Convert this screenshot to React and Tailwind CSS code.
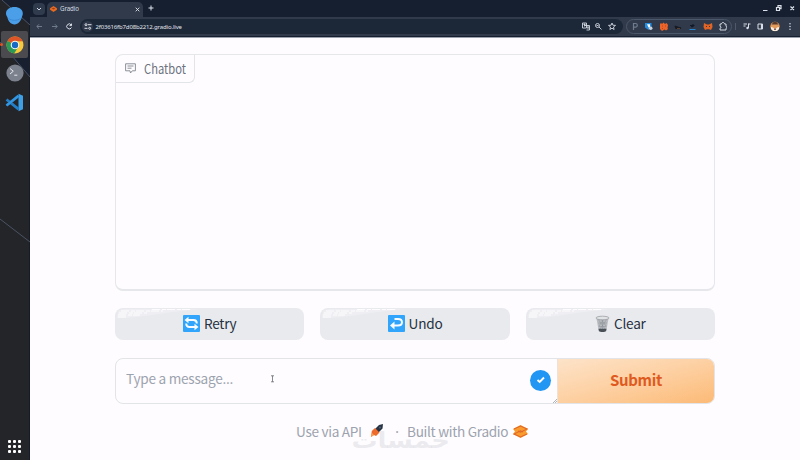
import React from 'react';

const sans = "font-['Noto_Sans_CJK_SC',sans-serif]";

function WaterIcon() {
  return (
    <svg width="19" height="19" viewBox="0 0 19 19">
      <path d="M1 7.500C1 3.500 4.800 1 9.500 1S17.800 3.500 17.800 7.500c0 1.500-.6 2.500-1 3.800-1 4-3.700 7-7.200 7.300-3.900-.3-6.400-3.400-7.200-7.300C1.700 9.800 1 9 1 7.500z" fill="#4b9fe9" />
      <path d="M3.500 12.500c2 1.300 4 1.800 6 1.800s4.500-.6 6-1.800" fill="none" stroke="#3a8ad6" strokeWidth="1" />
    </svg>
  );
}

function ChromeIcon() {
  return (
    <svg width="18" height="18" viewBox="0 0 18 18">
      <circle cx="9" cy="9" r="8.500" fill="#f8c93c" />
      <path d="M9 9L1.600 4.800A8.500 8.500 0 0 0 8.200 17.500L12.500 10.500z" fill="#2a9a55" />
      <path d="M9 9L1.600 4.800A8.500 8.500 0 0 1 16.700 5.200H9z" fill="#de5527" />
      <circle cx="9" cy="9" r="4.300" fill="#f5f7fa" />
      <circle cx="9" cy="9" r="3.200" fill="#1769c4" />
    </svg>
  );
}

function TerminalIcon() {
  return (
    <svg width="18" height="18" viewBox="0 0 18 18">
      <circle cx="9" cy="9" r="8.600" fill="#7c828d" />
      <path d="M4 4.500l3.300 2.700L4 10M8.300 11.200h3" fill="none" stroke="#e5e7eb" strokeWidth="1" />
    </svg>
  );
}

function CodeIcon() {
  return (
    <svg width="19" height="19" viewBox="0 0 19 19">
      <path d="M13.500 0.800l4.500 2v13.400l-4.500 2z" fill="#3e9fe5" />
      <path d="M1.500 6.500l12 9.700M1.500 12.500l12-9.700" stroke="#237fc8" strokeWidth="2.800" />
      <path d="M1.500 12.500l12-9.700" stroke="#3597df" strokeWidth="2.200" />
    </svg>
  );
}

function Dock() {
  return (
    <aside className="relative flex w-[30px] shrink-0 flex-col items-center border-r border-[#141c2b] bg-[#242529]">
      <svg className="absolute left-0 top-0" width="30" height="250" viewBox="0 0 30 250">
        <path d="M2 0L30 25V0zM0 43l30 35V41L27 39H0z" fill="#18202f" />
        <path d="M2 0l28 25M0 42l30 35M0 219l30 23" fill="none" stroke="#566072" strokeWidth="0.8" />
      </svg>
      <div className="relative mt-1.5 flex h-[19px] w-full items-center justify-center"><WaterIcon /></div>
      <div className="relative mt-1.5 flex h-[27px] w-[27px] items-center justify-center rounded-xs bg-[#4b4b4f]">
        <ChromeIcon />
      </div>
      <div className="relative mt-1.5 flex h-[18px] items-center"><TerminalIcon /></div>
      <div className="relative mt-[10px] flex h-[20px] items-center"><CodeIcon /></div>
      <span className="absolute left-0 top-[43px] size-[3px] rounded-full bg-[#df5426]" />
      <div className="mb-[7px] mt-auto grid grid-cols-3 gap-[2px]">
        {Array.from({ length: 9 }, (_, i) => <i key={i} className="size-[3px] rounded-[1px] bg-white" />)}
      </div>
    </aside>
  );
}

function BrowserBar() {
  return (
    <header className="h-[38px] shrink-0 border-b border-[#9ba1ac] bg-[#151f30]">
      <div className="flex h-[17px] items-end">
        <div className="mb-[2px] ml-[3px] flex size-[12px] items-center justify-center rounded bg-[#303b4d]">
          <svg width="6" height="4" viewBox="0 0 6 4"><path d="M1 1l2 2 2-2" fill="none" stroke="#d9dee8" /></svg>
        </div>
        <div className="ml-[2px] flex h-[15px] w-[96px] items-center rounded-t-[5px] bg-[#303a4b] pb-px pl-[3px] pr-[3px]">
          <svg width="7" height="6" viewBox="0 0 8 7"><path d="M0 2.500L4 0l4 2.500v2L4 7 0 4.500z" fill="#e86b20" /><path d="M2 3l2-1 2 1-2 1z" fill="#963d19" /></svg>
          <span className="ml-[3px] font-['Noto_Sans',sans-serif] text-[6.2px] leading-none tracking-[-0.1px] text-[#d5dae3]">Gradio</span>
          <svg className="ml-auto" width="5" height="5" viewBox="0 0 5 5"><path d="M.7.7l3.600 3.600M4.300.7L.7 4.300" stroke="#e1e5ec" strokeWidth=".9" /></svg>
        </div>
        <svg className="mb-[6px] ml-[5px]" width="6" height="6" viewBox="0 0 6 6"><path d="M3 .5v5M.5 3h5" stroke="#dfe4ec" /></svg>
        <svg className="mb-[4px] ml-auto mr-[4px]" width="34" height="9" viewBox="0 0 34 9" fill="none" stroke="#dce1e9" strokeWidth="1.200">
          <path d="M1 6.500h4.500M28.500 2.500l3.500 3.500M32 2.500L28.500 6" />
          <path d="M14.500 3.500h3v3h-3zM16 3V1.700h3v3h-1" />
        </svg>
      </div>
      <div className="flex h-[19px] items-center bg-[#303a4b]">
        <svg className="ml-[6px]" width="37" height="9" viewBox="0 0 37 9" fill="none" strokeWidth="1">
          <path d="M6 4.500H1m2-2.200L.8 4.500 3 6.700M16 4.500h5m-2-2.200l2.200 2.200L19 6.700" stroke="#707b8b" />
          <path d="M35.300 3A2.500 2.500 0 1 0 35.500 5.500M35.500 1.600v2h-2" stroke="#dce1e9" />
        </svg>
        <div className="ml-[7px] flex h-[15px] w-[543px] items-center rounded-full bg-[#1c2738] pl-[2px] pr-[5px]">
          <div className="flex size-[11px] items-center justify-center rounded-full bg-[#303a4b]">
            <svg width="8" height="7" viewBox="0 0 8 7" fill="none" stroke="#dce1e9" strokeWidth="1"><path d="M4 1.700h3.500M.5 5.300h3" /><circle cx="2" cy="1.700" r="1" /><circle cx="5.700" cy="5.300" r="1" /></svg>
          </div>
          <span className="ml-[2.5px] whitespace-nowrap font-['Noto_Sans',sans-serif] text-[6px] leading-none tracking-[-0.15px] text-[#e0e4ea]">2f03616fb7d08b2212.gradio.live</span>
          <svg className="ml-auto" width="37" height="9" viewBox="0 0 37 9" fill="none" stroke="#d3d9e2" strokeWidth=".9">
            <path d="M1.500 1h4v5h-4zM3.500 3.500h5V8h-3M2.500 2.500h2M3.500 1.500v3M6 5h2M7 5v2" />
            <circle cx="16.500" cy="3.500" r="2" /><path d="M18 5l2.500 2.500M15.500 3.500h2" />
            <path d="M31 1l.9 2.200 2.600.2-2 1.600.6 2.500L31 6.200l-2.100 1.300.6-2.500-2-1.600 2.600-.2z" />
          </svg>
        </div>
        <div className="ml-[3px] flex h-[15px] w-[106px] items-center rounded-full border border-[#4b576a] px-[4px]">
          <svg width="96" height="11" viewBox="0 0 96 11">
            <path d="M2.500 9V2.500H4.500a1.800 1.800 0 0 1 0 3.600H2.500" fill="none" stroke="#6f7b8e" strokeWidth="1.200" />
            <path d="M14 2h6.500v4.500L17.500 9 14 6.500z" fill="#248de0" /><path d="M16 3.200h3v3.300h-1.500z" fill="#fff" /><circle cx="19.700" cy="7.300" r="1.800" fill="#c9d0da" />
            <path d="M29 3l1-1 1 1 1.500-1.500L34 3l1.500-1L37 4l-.5 3L37 8l-2 1.500-1.500-1L31 10l-2-2z" fill="#ed6429" /><path d="M31 5h1M34 5h1M31 7.500h1" stroke="#bd4321" />
            <path d="M43.500 5c1.500-1 3 .8 5 1 2 0 2.500 1 1 2h-5z" fill="#171b22" /><path d="M46 7.500h3" stroke="#8a5b3c" strokeWidth=".6" />
            <path d="M59 4.500h4.500M62 3v3M60 5.700h2" stroke="#111a29" strokeWidth="1.200" /><path d="M58.500 8.500h6" stroke="#2588d4" strokeWidth="1" />
            <path d="M73 2l3 1.500h2L81 2l.5 4-1.500 3-2-.7h-2L74 9l-1.500-3z" fill="#df6425" /><path d="M75 5.500h1M78 5.500h1" stroke="#4b3335" />
            <path d="M89 3h1.500c0-2 3-2 3 0H95v2.300c1.200 0 1.200 2 0 2V9h-6V7.300c1.300 0 1.300-2 0-2z" fill="none" stroke="#d6dbe4" />
          </svg>
        </div>
        <span className="ml-[3px] h-[7px] w-px bg-[#4f5968]" />
        <svg className="ml-[7px]" width="54" height="11" viewBox="0 0 54 11" fill="none" stroke="#d8dde6">
          <path d="M.5 3h3.500M.5 5h2M5.500 2.500v4.500M5.500 3h2" /><circle cx="4.500" cy="7" r="1.200" fill="#d8dde6" stroke="none" />
          <path d="M15 3h4.500v5H15z" /><path d="M18.800 3v5" strokeWidth="1.800" />
          <circle cx="32" cy="5.500" r="4.700" fill="#e09a5c" stroke="none" /><path d="M28.500 3.500l2-2.500h3l2 2.500z" fill="#57392d" stroke="none" /><path d="M28 6l2 .5 2 2 2-2 2-.5v2l-2 2h-4l-2-2z" fill="#f9edde" stroke="none" /><path d="M31 9l1-2 1 2z" fill="#4d3a52" stroke="none" />
          <circle cx="47" cy="2.700" r=".8" fill="#c8ced8" stroke="none" /><circle cx="47" cy="5.500" r=".8" fill="#c8ced8" stroke="none" /><circle cx="47" cy="8.300" r=".8" fill="#c8ced8" stroke="none" />
        </svg>
      </div>
    </header>
  );
}

function RetryIcon() {
  return (
    <svg width="17" height="17" viewBox="0 0 17 17">
      <rect width="17" height="17" rx="1" fill="#31a5fb" />
      <path d="M4 5h6.500c2.200 0 3.300 1.200 3.300 3.500M13 12H6.500c-2.200 0-3.300-1.200-3.300-3.500" fill="none" stroke="#f8fcff" strokeWidth="1.900" />
      <path d="M1.500 5L5.500 1.800v6.400zM15.500 12L11.500 8.800v6.400z" fill="#f8fcff" />
    </svg>
  );
}

function UndoIcon() {
  return (
    <svg width="17" height="17" viewBox="0 0 17 17">
      <rect width="17" height="17" rx="1" fill="#31a5fb" />
      <path d="M6.500 4h3.500c5.300 0 5.300 6.500 0 6.500H5" fill="none" stroke="#f8fcff" strokeWidth="2" />
      <path d="M2 10.500L6.500 6.500v8z" fill="#f8fcff" />
    </svg>
  );
}

function BinIcon() {
  return (
    <svg width="15" height="18" viewBox="0 0 15 18">
      <path d="M1.500 3.500h12L11.300 16c-1.500 1.400-6 1.400-7.600 0z" fill="#b9bcc1" />
      <path d="M3 4l7 10M6 4l5 7M12 4L5 14M9 4l-5 7M7.500 4v10M3.200 8h8.600M3.700 11.500h7.600" stroke="#8b9097" strokeWidth=".5" />
      <path d="M3.500 13.800h8l-.5 2.200c-1.500 1.300-5.400 1.300-7 0z" fill="#4a5058" />
      <ellipse cx="7.500" cy="3" rx="6.500" ry="1.800" fill="#e2e3e5" stroke="#9b9fa5" strokeWidth=".8" />
    </svg>
  );
}

function Action({ icon, children }) {
  return (
    <button className="relative flex h-8 items-center justify-center gap-1 overflow-hidden rounded-[8px] bg-[#e8eaed] text-[13.6px] leading-none tracking-[-0.25px] text-[#263041]">
      <svg className="absolute left-0 top-0" width="88" height="12" viewBox="0 0 88 12">
        <path d="M3 4Q4 2 9 1H84L67 3 50 5 37 7 22 9 7 10H2z" fill="#efeff3" />
        <path d="M3 9h10M3 7h22M4 5h28M6 3h42M37 1.500h38" stroke="#fefcfe" strokeWidth="1.200" strokeDasharray="8 2 4 1" />
      </svg>
      <span className="relative -mt-px">{icon}</span>
      <span className="relative">{children}</span>
    </button>
  );
}

export default function App() {
  return (
    <div className={`relative flex h-[460px] w-[800px] overflow-hidden bg-[#fefcfe] ${sans}`}>
      <Dock />
      <div className="flex min-w-0 flex-1 flex-col">
        <BrowserBar />
        <main className="ml-[85px] mt-4 w-[600px]">
          <section className="h-[237px] rounded-[8px] border border-b-2 border-[#e5e7eb]">
            <div className="flex h-[28px] w-[79px] items-center rounded-br-[6px] border-b border-r border-[#e2e4e8] pl-[9px] text-[13.3px] leading-none text-[#6b7280]">
              <svg className="shrink-0" width="11" height="11" viewBox="0 0 11 11" fill="none" stroke="#7e858f" strokeWidth=".9"><path d="M.6.8h9.800v7H7.300L5.500 10 5 7.800H.6zM2.500 3h6M2.500 5.200h4" /></svg>
              <span className="ml-[8px] inline-block origin-left scale-x-[.84]">Chatbot</span>
            </div>
          </section>
          <div className="mt-[17px] grid grid-cols-3 gap-4">
            <Action icon={<RetryIcon />}>Retry</Action>
            <Action icon={<UndoIcon />}>Undo</Action>
            <Action icon={<BinIcon />}>Clear</Action>
          </div>
          <div className="mt-[18px] flex h-[46px] overflow-hidden rounded-[8px] border border-[#e2e4e8]">
            <div className="relative flex flex-1 items-center pl-[10px] pr-[6px] text-[13.6px] leading-none tracking-[-0.25px] text-[#9ca3af]">
              <span className="mb-1 w-[107px] whitespace-nowrap">Type a message...</span>
              <svg className="mb-1 ml-[37px]" width="5" height="8" viewBox="0 0 5 8" fill="none" stroke="#666b74" strokeWidth=".8"><path d="M1 .8h3M2.500.8v6M1 6.800h3" /></svg>
              <div className="ml-auto mb-[2px] flex size-[21px] items-center justify-center rounded-full bg-[#2196f3]">
                <svg width="10" height="8" viewBox="0 0 10 8"><path d="M1.500 4l2.200 2L8 1.500" fill="none" stroke="white" strokeWidth="1.900" /></svg>
              </div>
              <svg className="absolute bottom-0 right-0" width="4" height="4"><path d="M0 4l4-4M2 4l2-2" stroke="#b1b5bc" /></svg>
            </div>
            <button className="w-[157px] border-l border-[#eee2d8] bg-linear-165 from-[#fde3c9] via-[#fdd2a6] via-45% to-[#fcba76] pb-1 text-[15px] leading-none font-bold tracking-[-0.35px] text-[#df5a20]">Submit</button>
          </div>
          <footer className="ml-[181px] mt-[18px] flex h-5 items-center whitespace-nowrap text-[13.6px] leading-none tracking-[-0.3px] text-[#9ca3af]">
            <span className="w-[66px]">Use via API</span>
            <svg className="-mt-0.5 ml-[8px]" width="14" height="14" viewBox="0 0 14 14"><path d="M5 5l4-4 4-1-.5 4.500-4 4z" fill="#263445" /><path d="M5 4L1.800 7 1 13l3-2 2 1 3.500-3.500z" fill="#ee6a2c" /><path d="M2 9l2 2-3 2z" fill="#f5a052" /><circle cx="10" cy="3.500" r="1" fill="#536174" /></svg>
            <span className="ml-[11px] flex w-[4px] justify-center font-['Noto_Sans',sans-serif]">·</span>
            <span className="ml-[8px] w-[103px]">Built with Gradio</span>
            <svg className="-mt-0.5 ml-[3px]" width="15" height="13" viewBox="0 0 15 13"><path d="M0 4l7.500-4L15 4l-2 2.500L15 9l-7.500 4L0 9l2-2.500z" fill="#f99c2d" /><path d="M1 4l6.500-3L14 4 7.500 7.200 5 6M14 9l-6.500 3L1 9l6.500-3.200L10 7" fill="none" stroke="#e0672b" strokeWidth="1.100" /></svg>
          </footer>
        </main>
      </div>
      <div dir="rtl" className="pointer-events-none absolute left-[352px] top-[428px] flex w-[97px] justify-center whitespace-nowrap font-['DejaVu_Sans',sans-serif] text-[22px] leading-[26px] font-bold text-[#9ca3af]/20"><span className="inline-block scale-x-[1.18]">خمسات</span></div>
    </div>
  );
}
